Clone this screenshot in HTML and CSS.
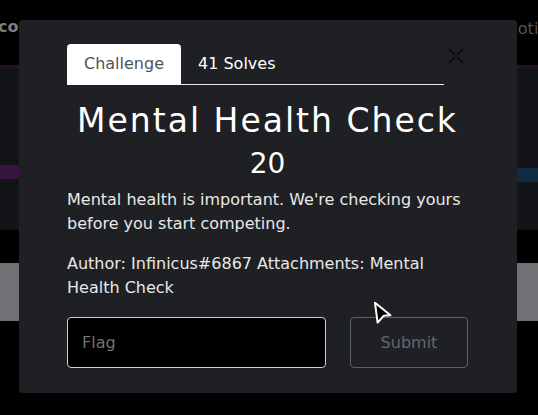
FILE: index.html
```html
<!DOCTYPE html>
<html lang="en">
<head>
<meta charset="utf-8">
<title>Mental Health Check</title>
<link rel="stylesheet" href="styles.css">
</head>
<body>
<div class="page">
  <header class="topbar">
    <span class="brand">con</span>
    <span class="notif">Notifications</span>
  </header>
  <div class="accent-line"></div>
  <section class="band">
    <div class="band-col"><div class="bar bar-purple"></div></div>
    <div class="band-col"><div class="bar bar-blue"></div></div>
  </section>
  <div class="gap-black"></div>
  <section class="grey-block"></section>
</div>

<div class="overlay">
  <div class="modal">
    <div class="tabs-row">
      <nav class="tabs">
        <span class="tab tab-active">Challenge</span>
        <span class="tab">41 Solves</span>
      </nav>
      <span class="close" aria-label="Close">
        <svg width="16" height="16" viewBox="0 0 16 16"><path d="M1 1 L15 15 M15 1 L1 15" stroke="#0e0f11" stroke-width="2.2" fill="none"/></svg>
      </span>
    </div>
    <h1 class="title">Mental Health Check</h1>
    <div class="points">20</div>
    <p class="desc">Mental health is important. We're checking yours before you start competing.</p>
    <p class="desc desc-author">Author: Infinicus#6867 Attachments: Mental Health Check</p>
    <form class="flag-form">
      <input class="flag-input" type="text" placeholder="Flag">
      <button class="submit-btn" type="button">Submit</button>
    </form>
  </div>
</div>

<svg class="cursor" width="20" height="24" viewBox="0 0 20 24"><path d="M2 1.8 L17.5 14.2 L10.6 14.8 L4.6 21.6 Z" fill="#000" stroke="#fff" stroke-width="2" stroke-linejoin="round"/></svg>
</body>
</html>
```

FILE: styles.css
```css
html, body {
  margin: 0;
  padding: 0;
  background: #000;
  font-family: "DejaVu Sans", "Liberation Sans", sans-serif;
  overflow: hidden;
}

.page {
  width: 538px;
  height: 415px;
  display: flex;
  flex-direction: column;
}

.topbar {
  height: 65px;
  display: flex;
  justify-content: space-between;
  align-items: flex-start;
  overflow: hidden;
}

.brand {
  margin-top: 17px;
  margin-left: -2px;
  font-weight: bold;
  font-size: 16px;
  line-height: 20px;
  color: #7d7d7d;
}

.notif {
  margin-top: 19px;
  margin-right: -68px;
  font-size: 16px;
  line-height: 20px;
  color: #555555;
  white-space: nowrap;
}

.accent-line {
  height: 3px;
  background: #2a0c30;
}

.band {
  height: 162px;
  background: #131417;
  display: flex;
}

.band-col {
  flex: 1;
}

.bar {
  height: 14px;
}

.bar-purple {
  margin-top: 97px;
  background: #36143f;
}

.bar-blue {
  margin-top: 100px;
  background: #0f2c42;
}

.gap-black {
  height: 33px;
}

.grey-block {
  height: 58px;
  background: #717275;
}

.overlay {
  position: fixed;
  left: 0;
  top: 0;
  width: 538px;
  height: 415px;
  display: flex;
  align-items: flex-start;
  padding: 20px 0 0 19px;
  box-sizing: border-box;
}

.modal {
  width: 498px;
  box-sizing: border-box;
  background: #1f2024;
  border-radius: 4px;
  padding: 24px 49px 25px 48px;
  color: #e8e8e8;
}

.tabs-row {
  display: flex;
  align-items: flex-start;
}

.tabs {
  flex: 1;
  display: flex;
  height: 40px;
  border-bottom: 1px solid #e9e9e9;
}

.tab {
  padding: 8px 17px;
  font-size: 16px;
  line-height: 24px;
  color: #ffffff;
}

.tab-active {
  background: #ffffff;
  color: #4f5358;
  height: 25px;
  border-radius: 4px 4px 0 0;
}

.close {
  width: 16px;
  height: 16px;
  margin: 4px 4px 0 4px;
  display: flex;
}

.title {
  margin: 16px 0 0 0;
  font-size: 33px;
  line-height: 40px;
  font-weight: normal;
  letter-spacing: 2px;
  text-align: center;
  color: #ffffff;
}

.points {
  margin-top: 6px;
  font-size: 28px;
  line-height: 34px;
  text-align: center;
  color: #ffffff;
}

.desc {
  margin: 7px 0 0 0;
  font-size: 16px;
  line-height: 24px;
}

.desc-author {
  margin-top: 16px;
}

.flag-form {
  margin-top: 17px;
  display: flex;
  gap: 24px;
}

.flag-input {
  flex: 1;
  min-width: 0;
  height: 51px;
  box-sizing: border-box;
  background: #000;
  border: 1px solid #cfcfcf;
  border-radius: 4px;
  padding: 0 14px;
  font-family: inherit;
  font-size: 16px;
  color: #fff;
  outline: none;
}

.flag-input::placeholder {
  color: #6e7275;
}

.submit-btn {
  width: 118px;
  height: 51px;
  box-sizing: border-box;
  background: transparent;
  border: 1px solid #5c6167;
  border-radius: 4px;
  font-family: inherit;
  font-size: 16px;
  color: #62676c;
}

.cursor {
  position: fixed;
  left: 373px;
  top: 301px;
}
```
